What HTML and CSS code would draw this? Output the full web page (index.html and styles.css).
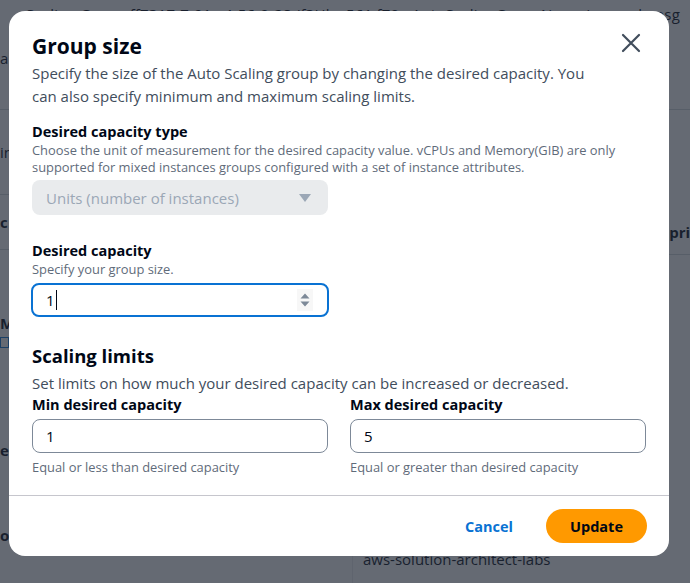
FILE: index.html
```html
<!DOCTYPE html>
<html lang="en">
<head>
<meta charset="utf-8">
<title>Group size</title>
<link rel="stylesheet" href="styles.css">
</head>
<body>
<div class="page">
  <div class="crumb">Scaling Group ff7317-7-91 · 4-56-9-28 (f3Hk · 561 f79 · AutoScalingGroupName/example-asg</div>
  <div class="cols">
    <div class="col-left">
      <div class="brow r1"><span>a</span></div>
      <div class="brow r2"><span>in</span></div>
      <div class="brow r3"><span class="b">c</span></div>
      <div class="brow r4"><span class="b">M</span><span class="ico"></span></div>
      <div class="brow r5"><span class="b">ec</span></div>
      <div class="brow r6"><span class="b">o</span></div>
    </div>
    <div class="col-right">
      <div class="rrow q1"></div>
      <div class="rrow q2"><span class="b">prin</span></div>
      <div class="rrow q3"><span class="labs">aws-solution-architect-labs</span></div>
    </div>
  </div>
</div>

<div class="overlay"></div>

<div class="modal" role="dialog">
  <div class="modal-head">
    <h2>Group size</h2>
    <button class="close" aria-label="Close">
      <svg width="22" height="22" viewBox="0 0 22 22"><path d="M3 3 L19 19 M19 3 L3 19" stroke="#414d5c" stroke-width="2.2" stroke-linecap="round" fill="none"/></svg>
    </button>
  </div>
  <p class="desc">Specify the size of the Auto Scaling group by changing the desired capacity. You can also specify minimum and maximum scaling limits.</p>

  <div class="field f-type">
    <div class="label">Desired capacity type</div>
    <div class="hint">Choose the unit of measurement for the desired capacity value. vCPUs and Memory(GIB) are only supported for mixed instances groups configured with a set of instance attributes.</div>
    <div class="select">
      <span>Units (number of instances)</span>
      <svg width="14" height="10" viewBox="0 0 14 10"><path d="M1 1 H13 L7 9 Z" fill="#9ba7b6"/></svg>
    </div>
  </div>

  <div class="field f-cap">
    <div class="label">Desired capacity</div>
    <div class="hint">Specify your group size.</div>
    <div class="input focused">
      <span class="val">1</span><span class="caret"></span>
      <span class="spin">
        <svg width="12" height="18" viewBox="0 0 12 18"><path d="M1.5 7.5 L6 2.5 L10.5 7.5 Z M1.5 10.5 L6 15.5 L10.5 10.5 Z" fill="#7d8998"/></svg>
      </span>
    </div>
  </div>

  <h3>Scaling limits</h3>
  <p class="desc one">Set limits on how much your desired capacity can be increased or decreased.</p>

  <div class="limits">
    <div class="field">
      <div class="label">Min desired capacity</div>
      <div class="input"><span class="val">1</span></div>
      <div class="hint after">Equal or less than desired capacity</div>
    </div>
    <div class="field">
      <div class="label">Max desired capacity</div>
      <div class="input"><span class="val">5</span></div>
      <div class="hint after">Equal or greater than desired capacity</div>
    </div>
  </div>

  <div class="footer">
    <button class="btn-link">Cancel</button>
    <button class="btn-primary">Update</button>
  </div>
</div>
</body>
</html>
```

FILE: styles.css
```css
* { box-sizing: border-box; }
html, body { margin: 0; padding: 0; }
body {
  width: 690px;
  height: 583px;
  overflow: hidden;
  background: #ffffff;
  font-family: "Open Sans", "Noto Sans", "Liberation Sans", sans-serif;
  color: #000716;
  position: relative;
}

/* background page */
.page {
  height: 583px;
  font-size: 15px;
  color: #000716;
}
.crumb {
  white-space: nowrap;
  padding: 4px 0 0 2px;
  height: 30px;
  overflow: hidden;
  letter-spacing: 0.2px;
  text-align: right;
  padding-right: 10px;
  direction: rtl;
}
.cols {
  display: flex;
  height: 553px;
}
.col-left {
  width: 353px;
  border-right: 1px solid #e9ebed;
  display: flex;
  flex-direction: column;
}
.col-right { flex: 1; display: flex; flex-direction: column; }
.brow, .rrow {
  border-bottom: 1px solid #d1d5db;
  display: flex;
  align-items: center;
  padding-left: 0;
  font-size: 15px;
}
.b { font-weight: 700; }
.r1 { height: 80px; align-items: flex-start; padding-top: 18px; }
.r2 { height: 85px; }
.r3 { height: 55px; }
.r4 { height: 160px; flex-direction: column; align-items: flex-start; justify-content: center; border-bottom: none; }
.r5 { height: 80px; border-bottom: none; }
.r6 { height: 90px; border-bottom: none; }
.ico {
  display: block;
  width: 9px; height: 11px;
  border: 1.5px solid #0972d3;
  margin-top: 4px;
}
.q1 { height: 80px; }
.q2 { height: 145px; justify-content: flex-end; padding-top: 100px; }
.q2 span { margin-right: -10px; }
.q3 { flex: 1; border-bottom: none; align-items: flex-end; padding: 0 0 14px 10px; }
.labs { font-size: 15px; }

.overlay {
  position: absolute;
  inset: 0;
  background: rgba(35, 43, 55, 0.7);
}

/* modal */
.modal {
  position: absolute;
  left: 9px;
  top: 11px;
  width: 660px;
  height: 545px;
  background: #ffffff;
  border-radius: 16px;
  padding: 20px 23px 0 23px;
  display: flex;
  flex-direction: column;
}
.modal-head {
  display: flex;
  justify-content: space-between;
  align-items: flex-start;
}
h2 {
  margin: 0;
  font-size: 21px;
  line-height: 30px;
  font-weight: 700;
  color: #000716;
}
.close {
  border: none;
  background: none;
  padding: 0;
  margin: 1px 4px 0 0;
  width: 22px;
  height: 22px;
  cursor: pointer;
}
.desc {
  margin: 1px 0 0 0;
  font-size: 15px;
  line-height: 23px;
  color: #414d5c;
  width: 570px;
}
.desc.one { width: auto; margin-top: 3px; }
.field { display: flex; flex-direction: column; }
.f-type { margin-top: 14px; }
.f-cap { margin-top: 26px; }
.label {
  font-size: 14.5px;
  line-height: 20px;
  font-weight: 700;
  color: #000716;
}
.hint {
  font-size: 12.9px;
  line-height: 17px;
  color: #5f6b7a;
}
.hint.after { margin-top: 6px; }
.select {
  margin-top: 4px;
  width: 296px;
  height: 35px;
  border-radius: 8px;
  background: #e9ebed;
  color: #9ba7b6;
  font-size: 15px;
  display: flex;
  align-items: center;
  justify-content: space-between;
  padding: 0 16px 0 14px;
}
.input {
  margin-top: 7px;
  width: 296px;
  height: 34px;
  border: 1px solid #7d8998;
  border-radius: 8px;
  display: flex;
  align-items: center;
  padding: 0 13px;
  font-size: 15px;
  color: #000716;
}
.input.focused {
  margin-top: 5px;
  margin-left: -1px;
  width: 298px;
  border: 2px solid #0972d3;
  padding: 0 14px 0 13px;
}
.caret {
  display: inline-block;
  width: 1px;
  height: 20px;
  background: #000716;
  margin-left: 1px;
}
.spin {
  margin-left: auto;
  width: 16px;
  height: 22px;
  background: #f7f7f7;
  display: flex;
  align-items: center;
  justify-content: center;
}
h3 {
  margin: 26px 0 0 0;
  font-size: 18.5px;
  line-height: 26px;
  font-weight: 700;
  color: #000716;
}
.limits {
  display: grid;
  grid-template-columns: 296px 296px;
  column-gap: 22px;
}
.limits .input { margin-top: 4px; }
.footer {
  margin: 19px -23px 0 -23px;
  border-top: 1px solid #c6c6cd;
  flex: 1;
  display: flex;
  align-items: center;
  justify-content: flex-end;
  padding: 0 22px 0 0;
  gap: 33px;
}
.btn-link {
  border: none;
  background: none;
  color: #0972d3;
  font-family: inherit;
  font-size: 14.5px;
  font-weight: 700;
  padding: 0;
  cursor: pointer;
}
.btn-primary {
  border: none;
  background: #ff9900;
  color: #000716;
  font-family: inherit;
  font-size: 14.5px;
  font-weight: 700;
  width: 101px;
  height: 34px;
  border-radius: 17px;
  cursor: pointer;
}
```
